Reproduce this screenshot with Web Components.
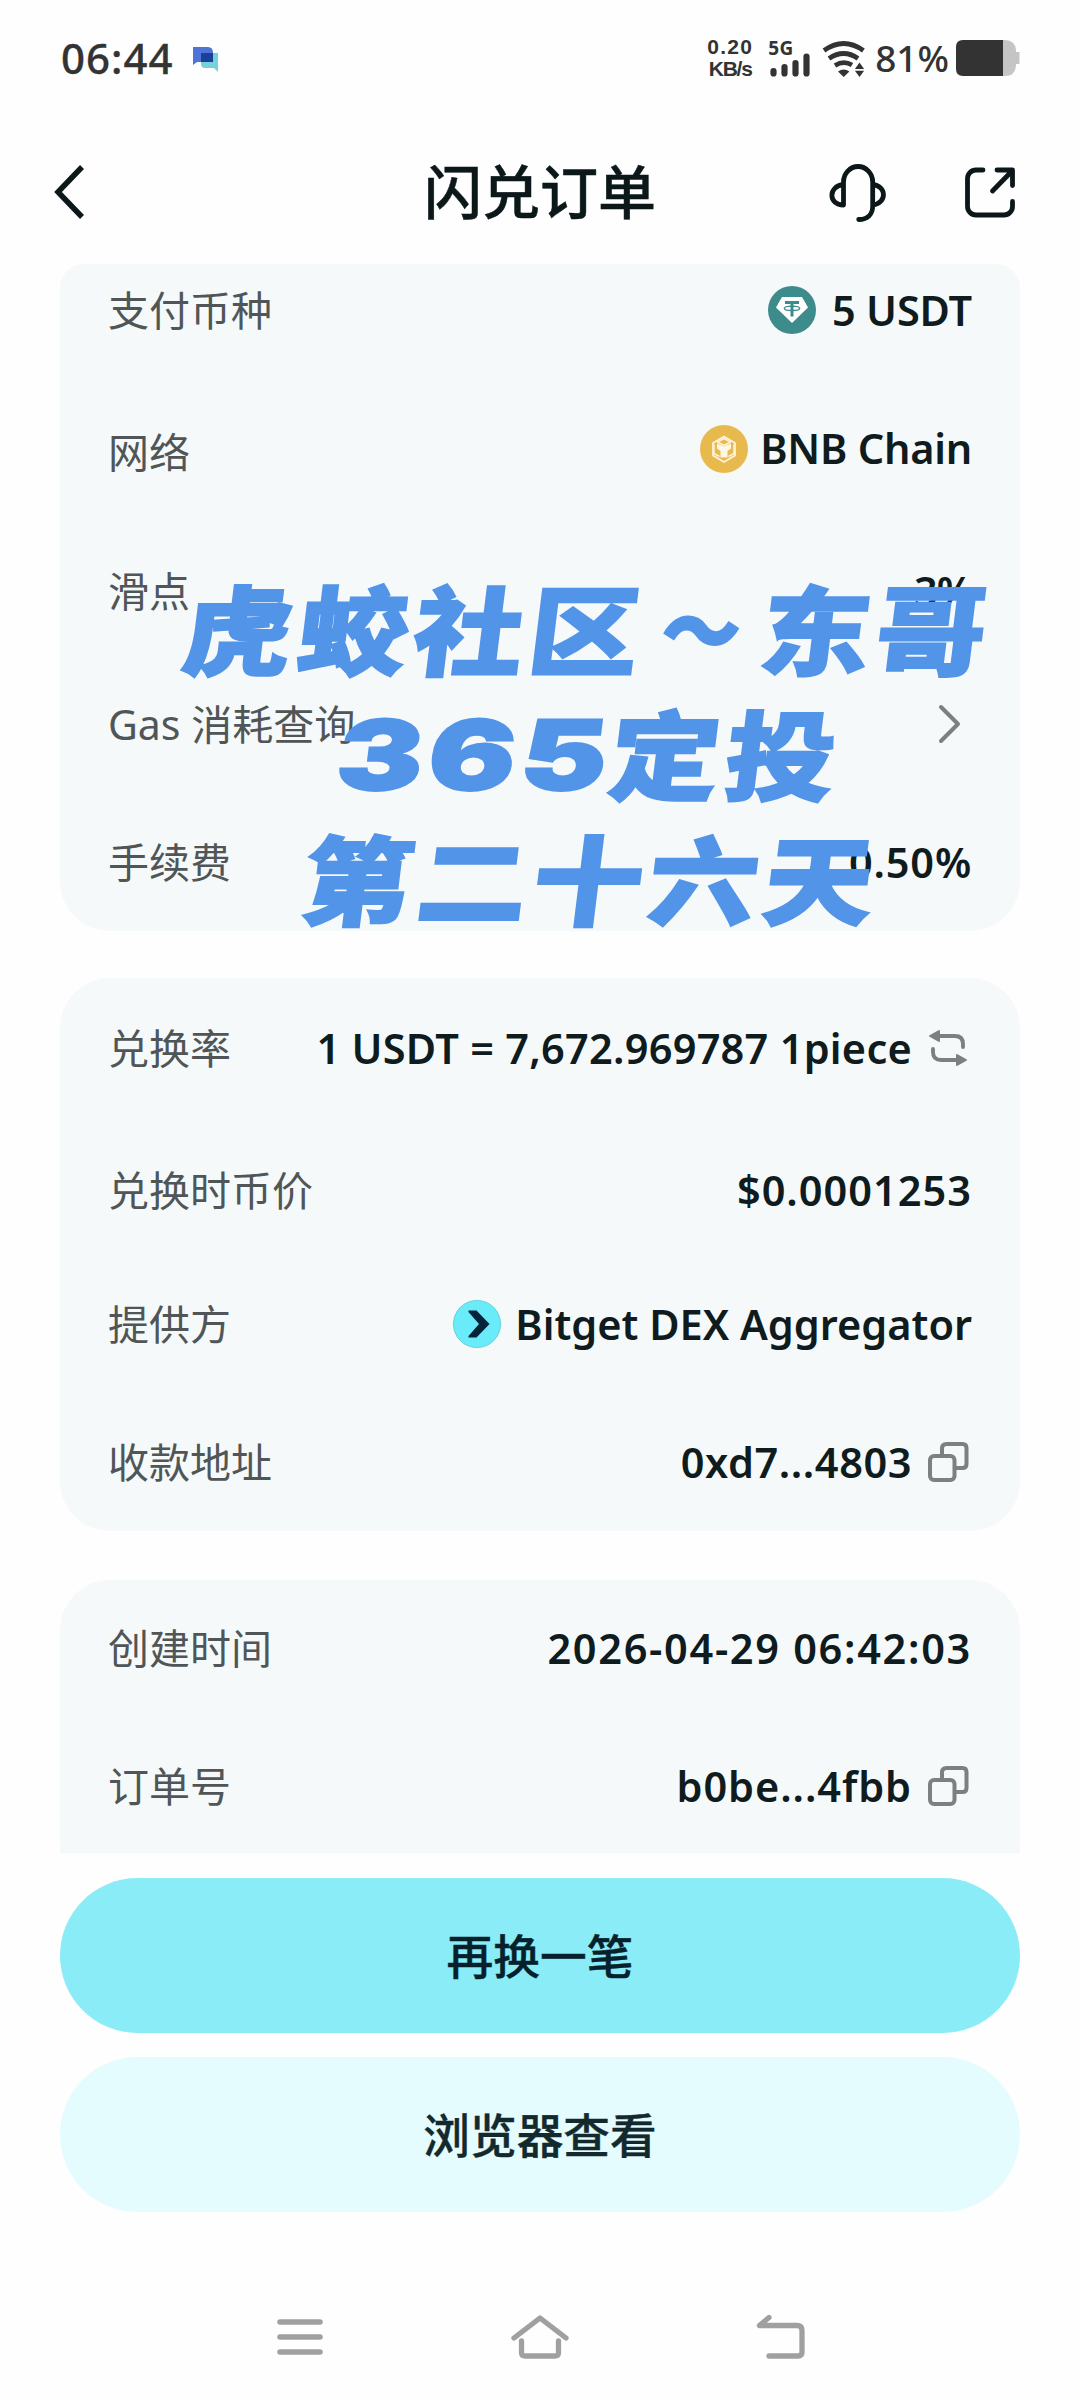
<!DOCTYPE html>
<html lang="zh-CN">
<head>
<meta charset="utf-8">
<title>闪兑订单</title>
<style>
html,body{margin:0;padding:0;background:#fefefe}
body{width:1080px;height:2400px;overflow:hidden;font-family:"Noto Sans","Noto Sans CJK SC",sans-serif;color:#0f1a1c}
</style>
</head>
<body>
<order-page></order-page>
<script>
const define = (name, html, init) => customElements.define(name, class extends HTMLElement {
  connectedCallback() {
    if (!this.shadowRoot) this.attachShadow({mode: 'open'}).innerHTML = html;
    if (init) init(this, this.shadowRoot);
  }
});

/* Text run tracked out so that it fills the width given in "w". */
define('fit-text', `<style>:host{display:block;white-space:pre;flex:none}span{display:inline-block}</style><span><slot></slot></span>`, (el, root) => {
  const span = root.querySelector('span');
  const w = +el.getAttribute('w');
  const n = el.textContent.length;
  const gap = (w - span.offsetWidth) / n;
  span.style.letterSpacing = gap.toFixed(3) + 'px';
});

const icons = {
  back: [32, 56, `<path d="M29 3 5 28l24 25" stroke="#0b1719" stroke-width="5.5"/>`],
  headset: [60, 60, `<path d="M15.500 43V20a14.600 15.500 0 0 1 29.200 0v24c0 8-5 13.500-14 13.500M15.500 22.500C0 24 0 43 15.500 43M44.700 22.500C59 24 59 41 45 43" stroke="#0b1719" stroke-width="4.800" stroke-linecap="round" stroke-linejoin="round"/>`],
  share: [54, 54, `<path d="M20 5H13a8.500 8.500 0 0 0-8.500 8.500v28A8.500 8.500 0 0 0 13 50h28a8.500 8.500 0 0 0 8.500-8.500V36.500M29.500 26 48.500 6.500M34 5h15.500v15.500" stroke="#0b1719" stroke-width="4.800" stroke-linecap="round" stroke-linejoin="round"/>`],
  chat: [30, 26, `<path d="M2 2h15q5 0 5 6v9H6l-4 3z" fill="#4f74d8"/><path d="M10 8h17v19l-4-4H14q-4 0-4-4z" fill="#74d2de"/><path d="M10 8h12v9H10z" fill="#1c4098"/>`],
  bars: [34, 26, `<path d="M3.500 19v2.500M14.500 15v6.500M25.500 11v10.500M36.500 4.500v17" stroke="#333" stroke-width="6.200" stroke-linecap="round"/>`],
  wifi: [48, 38, `<path d="M4 11.500Q23.700-2.500 43.400 11.500M9 19.500Q23.700 9.500 38 19.500M15 26.500Q23.700 21 32 26" stroke="#333" stroke-width="4.700"/><path d="M18 32.500q5.700-4 11.400 0L23.700 38zM39.500 23.500l4.600 6.500h-9.200zM34.900 31.800h9.200l-4.600 6.200z" fill="#333"/>`],
  battery: [64, 36, `<path d="M47 0h2q10 0 11 10v2h3.500v12H60v2q-1 10-11 10h-2z" fill="#c5c5c5"/><path d="M7 0h40v36H7q-7 0-7-7V7q0-7 7-7z" fill="#333"/>`],
  usdt: [48, 48, `<circle cx="24" cy="24" r="24" fill="#3d8b8b"/><path d="M14 11h20l6 10.500L24 37 8 21.500z" fill="#fff"/><path d="M17 16.500h14M24 16.500V30.500" stroke="#3d8b8b" stroke-width="3"/><ellipse cx="24" cy="22.300" rx="7.700" ry="2.200" stroke="#3d8b8b" stroke-width="1.400"/>`],
  bnb: [48, 48, `<circle cx="24" cy="24" r="24" fill="#e8b94d"/><path d="M24 11.500 35 18v12.500L24 37 13 30.500V18z" stroke="#fff3d8" stroke-width="1.800" stroke-linejoin="round"/><path d="M24 13.500 30.500 17 24 20.500 17.500 17zM14 19.500v9l5.500 3M34 19.500v9l-5.500 3" stroke="#fff3d8" stroke-width="1.500" stroke-linejoin="round"/><path d="M17 18.500l7 3 7-3v5L27.500 26v6.500h-7V26L17 23.500z" fill="#fff6e4"/>`],
  bitget: [48, 48, `<circle cx="24" cy="24" r="23.600" fill="#6aebfa" stroke="#54ccd6" stroke-width=".8"/><path d="M15.500 10.500h8L36.500 24 23.500 37.500h-8v-1.500L26 24 15.500 12z" fill="#05243a"/>`],
  chevron: [26, 44, `<path d="M4 5l17 17L4 39" stroke="#7c8080" stroke-width="4" stroke-linecap="round" stroke-linejoin="round"/>`],
  swap: [40, 40, `<path d="M8 8h19q8 0 8 8v3M5 21v3q0 8 8 8h17" stroke="#7c8080" stroke-width="3.900" stroke-linecap="round"/><path d="M2 8l9-5v10zM38 32l-9-5v10z" fill="#7c8080" stroke="#7c8080" stroke-width="2" stroke-linejoin="round"/>`],
  copy: [42, 42, `<path d="M15 14V7.500Q15 3 19.500 3h16Q39.500 3 39.500 7v16q0 4-4 4H29" stroke="#7c8080" stroke-width="4"/><rect x="3" y="15" width="24.500" height="24" rx="4" stroke="#7c8080" stroke-width="4"/>`],
  menu: [46, 40, `<path d="M3 5h40M3 20h40M3 35h40" stroke="#a0a0a0" stroke-width="5.500" stroke-linecap="round"/>`],
  home: [60, 48, `<path d="M4 25 30 5l26 20M11.500 28v12q0 3 4 3h29q4 0 4-3V28" stroke="#a0a0a0" stroke-width="5.300" stroke-linejoin="round" stroke-linecap="round"/>`],
  undo: [52, 46, `<path d="M13 3.500 3.500 11.500H41q5 0 5 5V38q0 4-4 4H13" stroke="#a0a0a0" stroke-width="5.300" stroke-linecap="round" stroke-linejoin="round"/>`]
};
define('ui-icon', `<style>:host{display:block;flex:none;line-height:0}svg{display:block;overflow:visible}</style><div></div>`, (el, root) => {
  const [w, h, body] = icons[el.getAttribute('name')];
  root.querySelector('div').innerHTML = `<svg width="${w}" height="${h}" viewBox="0 0 ${w} ${h}" fill="none">${body}</svg>`;
});

define('status-bar', `<style>
:host{display:flex;height:116px;box-sizing:border-box;padding:0 60px 0 61px;justify-content:space-between;align-items:center;color:#333;font-weight:500}
.l,.r{display:flex;align-items:center}
.time{font-size:42px;font-weight:500;line-height:56px;-webkit-text-stroke:.3px #333}
.net{margin-right:15px;font-size:21px;line-height:22px;font-weight:700;font-family:"Liberation Sans","Noto Sans",sans-serif;display:flex;flex-direction:column;align-items:center}
.sig{width:42px;margin-right:10px;height:40px;font-size:19px;line-height:20px;font-weight:700;display:flex;flex-direction:column}
.sig ui-icon{margin-top:-6px;margin-left:2px}
.pct{font-size:37px;line-height:50px}
</style>
<div class="l"><fit-text class="time" w="113">06:44</fit-text><ui-icon name="chat" style="margin:0 0 0 17px"></ui-icon></div>
<div class="r"><div class="net"><fit-text w="46">0.20</fit-text><fit-text w="43">KB/s</fit-text></div>
<div class="sig"><fit-text w="26">5G</fit-text><ui-icon name="bars"></ui-icon></div>
<ui-icon name="wifi"></ui-icon><fit-text class="pct" w="74" style="margin-left:7px">81%</fit-text><ui-icon name="battery" style="margin-left:7px"></ui-icon></div>`);

define('title-bar', `<style>
:host{display:grid;grid-template-columns:1fr auto 1fr;align-items:center;height:148px;box-sizing:border-box;padding:3px 53px 0 53px}
.t{font-size:58px;line-height:80px;font-weight:500;color:#0b1719;-webkit-text-stroke:.5px #0b1719}
.a{display:flex;justify-content:flex-end;align-items:center;gap:75px;padding-right:10px}
</style><ui-icon name="back"></ui-icon><fit-text class="t" w="233"><slot></slot></fit-text><div class="a"><ui-icon name="headset"></ui-icon><ui-icon name="share"></ui-icon></div>`, (el, root) => {
  root.querySelector('fit-text').textContent = el.textContent;
});

define('info-card', `<style>:host{display:block;margin:0 60px;padding:0 48px;box-sizing:border-box;background:#f5f9fa;border-radius:50px}</style><slot></slot>`);

define('info-row', `<style>
:host{display:flex;height:56px;justify-content:space-between;align-items:center}
.k{font-size:41px;line-height:56px;color:#505657;white-space:pre}
.v{display:flex;align-items:center;font-size:41.500px;line-height:56px;font-weight:600;color:#0f1b1d}
</style><div class="k"><slot name="label"></slot></div><div class="v"><slot></slot></div>`);

define('pill-button', `<style>
:host{display:flex;margin:0 60px;height:155px;border-radius:78px;align-items:center;justify-content:center;background:#8aecf7;color:#06212c;font-size:46.700px;font-weight:500;line-height:64px;-webkit-text-stroke:.4px currentColor}
:host([kind=light]){background:#e4fcfe;color:#14292d}
</style><slot></slot>`);

define('nav-bar', `<style>:host{display:flex;justify-content:space-between;align-items:center;padding:0 272px 0 277px;height:60px}</style>
<ui-icon name="menu"></ui-icon><ui-icon name="home"></ui-icon><ui-icon name="undo"></ui-icon>`);

/* Slanted banner caption that floats over the first card. */
define('caption-overlay', `<style>
:host{position:absolute;left:0;top:563px;width:1080px;color:#5294e8;-webkit-text-stroke:2px #5294e8;font-family:"Noto Sans CJK SC",sans-serif;font-weight:900;font-size:97px;line-height:125px}
.ln{display:flex;height:125px;transform:skewX(-7deg)}
.ln fit-text{transform:scaleX(1.130);transform-origin:0 50%}
.box{flex:none}
.ln .d{font-family:Inter,"Noto Sans",sans-serif;font-size:97px;padding-top:4px;transform:scaleX(1.330)}
.tl{display:inline-block;transform:scale(.720,.900)}
</style>
<div class="ln" style="padding-left:184px"><div class="box"><fit-text w="716">虎蛟社区<span class="tl">～</span>东哥</fit-text></div></div>
<div class="ln" style="padding-left:338px"><div class="box" style="width:273px"><fit-text class="d" w="207">365</fit-text></div><div class="box"><fit-text w="205">定投</fit-text></div></div>
<div class="ln" style="padding-left:304px"><div class="box"><fit-text w="510">第二十六天</fit-text></div></div>`);

define('order-page', `<style>
:host{display:block;position:relative;width:1080px;height:2400px;background:#fefefe;overflow:hidden}
.c1{height:667px;border-radius:24px 24px 50px 50px}
.c2{height:553px;margin-top:47px}
.c3{height:273px;margin-top:49px;border-radius:50px 50px 0 0}
</style>
<status-bar></status-bar>
<title-bar>闪兑订单</title-bar>
<info-card class="c1">
<info-row style="padding-top:18px"><span slot="label">支付币种</span><ui-icon name="usdt" style="margin-right:16px"></ui-icon><fit-text w="140">5 USDT</fit-text></info-row>
<info-row style="padding-top:84px"><span slot="label" style="display:block;padding-top:4px">网络</span><ui-icon name="bnb" style="margin:-3px 12px 0 0"></ui-icon><fit-text w="212" style="padding-bottom:5px">BNB Chain</fit-text></info-row>
<info-row style="padding-top:85px"><span slot="label">滑点</span><fit-text w="58">3%</fit-text></info-row>
<info-row style="padding-top:77px"><span slot="label">Gas 消耗查询</span><ui-icon name="chevron" style="margin-right:9px"></ui-icon></info-row>
<info-row style="padding-top:82px"><span slot="label">手续费</span><fit-text w="123">0.50%</fit-text></info-row>
</info-card>
<info-card class="c2">
<info-row style="padding-top:42px"><span slot="label">兑换率</span><fit-text w="595">1 USDT = 7,672.969787 1piece</fit-text><ui-icon name="swap" style="margin:0 4px 0 16px"></ui-icon></info-row>
<info-row style="padding-top:86px"><span slot="label">兑换时币价</span><fit-text w="235">$0.0001253</fit-text></info-row>
<info-row style="padding-top:78px"><span slot="label">提供方</span><ui-icon name="bitget" style="margin-right:14px"></ui-icon><fit-text w="457">Bitget DEX Aggregator</fit-text></info-row>
<info-row style="padding-top:82px"><span slot="label">收款地址</span><fit-text w="231">0xd7...4803</fit-text><ui-icon name="copy" style="margin:0 3px 0 15px"></ui-icon></info-row>
</info-card>
<info-card class="c3">
<info-row style="padding-top:40px"><span slot="label">创建时间</span><fit-text w="425">2026-04-29 06:42:03</fit-text></info-row>
<info-row style="padding-top:82px"><span slot="label">订单号</span><fit-text w="235">b0be...4fbb</fit-text><ui-icon name="copy" style="margin:0 3px 0 15px"></ui-icon></info-row>
</info-card>
<pill-button style="margin-top:25px">再换一笔</pill-button>
<pill-button kind="light" style="margin-top:24px">浏览器查看</pill-button>
<nav-bar style="margin-top:95px"></nav-bar>
<caption-overlay></caption-overlay>`);
</script>
</body>
</html>
